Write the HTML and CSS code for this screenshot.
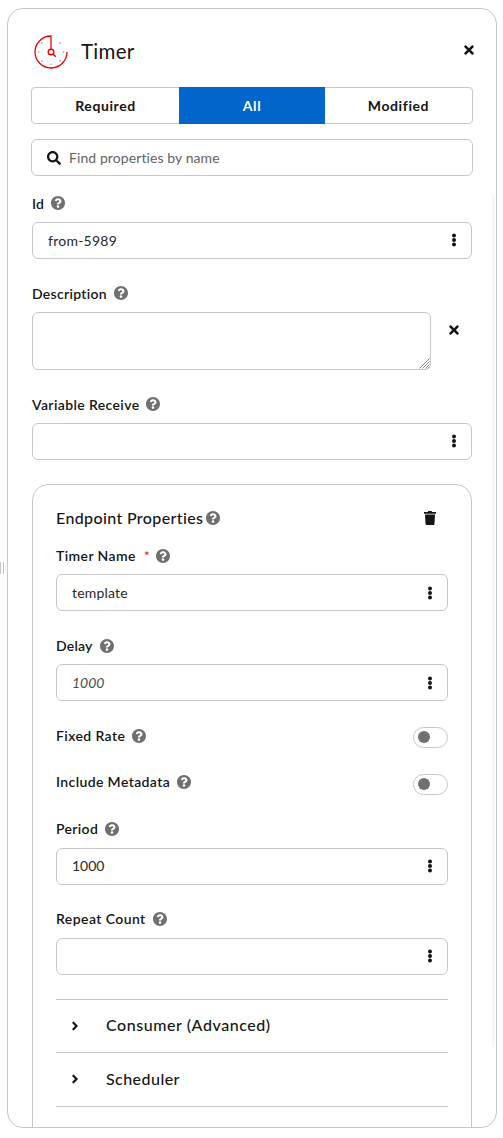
FILE: index.html
```html
<!DOCTYPE html>
<html lang="en">
<head>
<meta charset="utf-8">
<title>Timer</title>
<link rel="stylesheet" href="styles.css">
</head>
<body>
<svg class="defs" width="0" height="0">
<symbol id="help" viewBox="8 8 496 496"><path d="M504 256c0 136.997-111.043 248-248 248S8 392.997 8 256C8 119.083 119.043 8 256 8s248 111.083 248 248zM262.655 90c-54.497 0-89.255 22.957-116.549 63.758-3.536 5.286-2.353 12.415 2.715 16.258l34.699 26.31c5.205 3.947 12.621 3.008 16.665-2.122 17.864-22.658 30.113-35.797 57.303-35.797 20.429 0 45.698 13.148 45.698 32.958 0 14.976-12.363 22.667-32.534 33.976C247.128 238.528 216 254.941 216 296v4c0 6.627 5.373 12 12 12h56c6.627 0 12-5.373 12-12v-1.333c0-28.462 83.186-29.647 83.186-106.667 0-58.002-60.165-102-116.531-102zM256 338c-25.365 0-46 20.635-46 46 0 25.364 20.635 46 46 46s46-20.636 46-46c0-25.364-20.635-46-46-46z"/></symbol>
<symbol id="times" viewBox="0 0 352 512"><path d="M242.72 256l100.07-100.07c12.28-12.28 12.28-32.19 0-44.48l-22.24-22.24c-12.28-12.28-32.19-12.28-44.48 0L176 189.28 75.93 89.21c-12.28-12.28-32.19-12.28-44.48 0L9.21 111.45c-12.28 12.28-12.28 32.19 0 44.48L109.28 256 9.21 356.07c-12.28 12.28-12.28 32.19 0 44.48l22.24 22.24c12.28 12.28 32.2 12.28 44.48 0L176 322.72l100.07 100.07c12.28 12.28 32.2 12.28 44.48 0l22.24-22.24c12.28-12.28 12.28-32.19 0-44.48L242.72 256z"/></symbol>
<symbol id="dots" viewBox="0 0 4 14"><circle cx="2" cy="2.4" r="2"/><circle cx="2" cy="7" r="2"/><circle cx="2" cy="11.6" r="2"/></symbol>
<symbol id="angle" viewBox="0 0 256 512"><path d="M224.3 273l-136 136c-9.4 9.4-24.6 9.4-33.9 0l-22.6-22.6c-9.4-9.4-9.4-24.6 0-33.9l96.4-96.4-96.4-96.4c-9.4-9.4-9.4-24.6 0-33.9L54.3 103c9.4-9.4 24.6-9.4 33.9 0l136 136c9.5 9.4 9.5 24.6.1 34z"/></symbol>
</svg>
<div class="page">
<div class="grip"></div>
<main class="panel">
  <header class="head">
    <svg class="timer" viewBox="0 0 34 34" fill="none" stroke="#ee0000"><path d="M17 14V1A16 16 0 1 0 33 17" stroke-width="1.3"/><circle cx="17" cy="17" r="2.8" stroke-width="1.4"/><path d="M19 19l2.8 2.8" stroke-width="1.5"/><g fill="#f59a9a" stroke="none"><circle cx="26" cy="8" r=".9"/><circle cx="29.5" cy="17" r=".9"/><circle cx="26" cy="26" r=".9"/><circle cx="17" cy="29.3" r=".9"/><circle cx="8" cy="26" r=".9"/><circle cx="4.5" cy="17" r=".9"/><circle cx="8" cy="8" r=".9"/></g></svg>
    <h1 class="title">Timer</h1>
    <svg class="times"><use href="#times"/></svg>
  </header>
  <div class="tabs"><div class="tab">Required</div><div class="tab on">All</div><div class="tab">Modified</div></div>
  <div class="search"><svg class="glass" viewBox="0 0 512 512"><path d="M505 442.7L405.3 343c-4.5-4.5-10.6-7-17-7H372c27.6-35.3 44-79.7 44-128C416 93.1 322.9 0 208 0S0 93.1 0 208s93.1 208 208 208c48.3 0 92.7-16.4 128-44v16.3c0 6.4 2.5 12.5 7 17l99.7 99.7c9.4 9.4 24.6 9.4 33.9 0l28.3-28.3c9.4-9.4 9.4-24.6.1-34zM208 336c-70.7 0-128-57.2-128-128 0-70.7 57.2-128 128-128 70.7 0 128 57.2 128 128 0 70.7-57.2 128-128 128z"/></svg><span class="hint">Find properties by name</span></div>
  <div class="form">
    <div class="field raised"><div class="label"><span class="l-id">Id</span><svg class="help"><use href="#help"/></svg></div><div class="input"><span class="v-id">from-5989</span><svg class="dots"><use href="#dots"/></svg></div></div>
    <div class="field raised"><div class="label"><span class="l-desc">Description</span><svg class="help"><use href="#help"/></svg></div><div class="area-row"><textarea class="area"></textarea><svg class="resizer" viewBox="0 0 11 11"><path d="M.5 10.5l10-10M3.5 10.5l7-7M6.5 10.5l4-4M9 10.5l1.5-1.5"/></svg><svg class="times"><use href="#times"/></svg></div></div>
    <div class="field raised"><div class="label"><span class="l-var">Variable Receive</span><svg class="help"><use href="#help"/></svg></div><div class="input"><span></span><svg class="dots"><use href="#dots"/></svg></div></div>
    <section class="card">
      <div class="card-head"><h2 class="card-title">Endpoint Properties</h2><svg class="help"><use href="#help"/></svg><svg class="trash" viewBox="0 0 12 14"><path d="M4 .6Q4 0 4.6 0h2.8Q8 0 8 .6V1h4v1.8H0V1h4z"/><path d="M1 3.5h10l-.6 9.7q-.1.8-.9.8h-7q-.8 0-.9-.8z"/></svg></div>
      <div class="field low"><div class="label"><span class="l-timer">Timer Name</span><span class="star">*</span><svg class="help"><use href="#help"/></svg></div><div class="input"><span class="v-temp">template</span><svg class="dots"><use href="#dots"/></svg></div></div>
      <div class="field low"><div class="label"><span class="l-delay">Delay</span><svg class="help"><use href="#help"/></svg></div><div class="input"><span class="ghost">1000</span><svg class="dots"><use href="#dots"/></svg></div></div>
      <div class="switch-row"><div class="label"><span class="l-fixed">Fixed Rate</span><svg class="help"><use href="#help"/></svg></div><div class="switch"></div></div>
      <div class="switch-row second"><div class="label"><span class="l-meta">Include Metadata</span><svg class="help"><use href="#help"/></svg></div><div class="switch"></div></div>
      <div class="field high"><div class="label"><span class="l-period">Period</span><svg class="help"><use href="#help"/></svg></div><div class="input"><span class="v-period">1000</span><svg class="dots"><use href="#dots"/></svg></div></div>
      <div class="field high"><div class="label"><span class="l-repeat">Repeat Count</span><svg class="help"><use href="#help"/></svg></div><div class="input"><span></span><svg class="dots"><use href="#dots"/></svg></div></div>
      <div class="group"><svg class="angle"><use href="#angle"/></svg><span class="g-cons">Consumer (Advanced)</span></div>
      <div class="group tall"><svg class="angle"><use href="#angle"/></svg><span class="g-sched">Scheduler</span></div>
      <div class="group"></div>
    </section>
  </div>
  <div class="scroll"></div>
</main>
</div>
</body>
</html>
```
FILE: styles.css
```css
* { box-sizing: border-box; }
body { margin: 0; background: #fff; color: #151515; font: 14px/21px Lato, "Open Sans", sans-serif; font-variant-ligatures: none; }
.defs { position: absolute; }
svg { display: block; flex: none; fill: #151515; }
.page { display: flex; height: 1138px; width: 503px; overflow: hidden; }
.grip { width: 4px; height: 12px; margin: 562px 3px 0 0; border: solid #c7c7c7; border-width: 0 1px; }
.panel { position: relative; width: 490px; height: 1120px; margin-top: 8px; padding: 0 23px; border: 1px solid #c7c7c7; border-radius: 16px; overflow: hidden; }
.head { display: flex; align-items: center; height: 78px; padding: 6px 0 0 3px; }
.timer { width: 34px; height: 34px; fill: none; margin-top: 1px; }
.title { flex: 1; margin: 0 0 0 13px; font-size: 20.5px; line-height: 26px; font-weight: 400; letter-spacing: .3px; }
.times { width: 10px; height: 14px; }
.head .times { margin: -3px -1px 0 0; }
.tabs, .search { display: flex; width: 442px; height: 37px; border: 1px solid #c7c7c7; border-radius: 4px; }
.tab { flex: 1; display: flex; justify-content: center; align-items: center; font-weight: 700; letter-spacing: .6px; }
.tab.on { flex: none; width: 146px; margin: -1px 0; background: #0066cc; color: #fff; }
.search { align-items: center; margin-top: 15px; padding-left: 15px; border-radius: 6px; }
.glass { width: 14px; height: 14px; }
.hint { margin-left: 8px; color: #636363; letter-spacing: .09px; }
.form { display: flex; flex-direction: column; gap: 24px; padding-top: 17px; margin: 0 1px; width: 440px; }
.label { display: flex; align-items: center; height: 21px; margin-bottom: 8px; font-weight: 600; white-space: nowrap; }
.help { width: 14px; height: 14px; margin-left: 7px; fill: #707070; }
.raised .help { margin-top: -2px; }
.input { display: flex; align-items: center; justify-content: space-between; height: 37px; border: 1px solid #c7c7c7; border-radius: 6px; padding: 0 15px; color: #292929; }
.dots { width: 4px; height: 14px; margin-top: -1px; }
.low .dots { margin-top: 1px; }
.area-row { position: relative; display: flex; align-items: flex-start; height: 58px; }
.area { width: 399px; height: 58px; margin: 0; border: 1px solid #c7c7c7; border-radius: 6px; resize: none; }
.resizer { position: absolute; left: 387px; top: 46px; width: 11px; height: 11px; fill: none; stroke: #777; stroke-width: .9; }
.area-row .times { margin: 11px 0 0 18px; }
.card { display: flex; flex-direction: column; gap: 24px; height: 720px; border: 1px solid #c7c7c7; border-radius: 16px; padding: 23px; }
.card-head { display: flex; align-items: center; height: 21px; margin-bottom: -8px; padding-bottom: 2px; }
.card-title { margin: 0; font-size: 16px; font-weight: 500; white-space: nowrap; letter-spacing: .37px; }
.card-head .help { margin-left: 3px; margin-top: 1px; }
.trash { width: 12px; height: 14px; margin: 0 12px 0 auto; }
.star { color: #b1380b; font-weight: 400; margin: 0 -1px 0 8px; }
.ghost { font-style: italic; color: #4d4d4d; }
.l-id { letter-spacing: .2px; }
.l-desc { letter-spacing: .3px; }
.l-var { letter-spacing: .38px; }
.l-timer { letter-spacing: .4px; }
.l-delay { letter-spacing: .2px; }
.l-fixed { letter-spacing: .4px; }
.l-meta { letter-spacing: .38px; }
.l-period { letter-spacing: .33px; }
.l-repeat { letter-spacing: .42px; }
.v-id { letter-spacing: .25px; }
.v-temp { letter-spacing: .18px; }
.v-period { padding-bottom: 2px; }
.switch-row { display: flex; justify-content: space-between; height: 24px; margin-bottom: -1px; }
.switch-row .label { margin: 0; }
.second .label, .high .label { padding-bottom: 2px; }
.switch { width: 35px; height: 21px; margin-top: 2px; padding: 3px 4px; border: 1px solid #c7c7c7; border-radius: 11px; }
.switch::before { content: ""; display: block; width: 12px; height: 12px; border-radius: 50%; background: #707070; }
.group { display: flex; align-items: center; height: 53px; margin: 0 0 -24px; padding-left: 15px; border-top: 1px solid #c7c7c7; font-size: 16px; font-weight: 500; flex: none; }
.group span { padding-bottom: 2px; }
.group .g-cons { padding-bottom: 3px; letter-spacing: .56px; }
.group.tall { height: 54px; }
.tall .angle { margin-top: -1px; }
.g-sched { letter-spacing: .45px; }
.angle { width: 8px; height: 14px; margin-right: 27px; }
.scroll { position: absolute; left: 484px; top: 186px; width: 3px; height: 852px; background: #f7f7f7; }
```
